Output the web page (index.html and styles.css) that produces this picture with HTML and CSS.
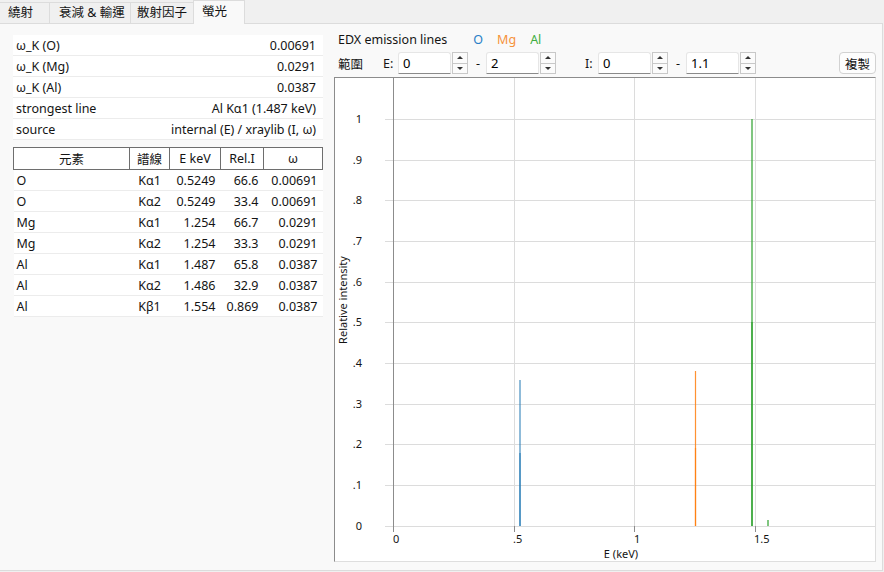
FILE: index.html
```html
<!DOCTYPE html>
<html lang="zh-Hant">
<head>
    <meta charset="UTF-8">
    <title>螢光</title>
    <link rel="stylesheet" href="styles.css">
</head>
<body>
    <div class="tabs">
        <div class="tab">繞射</div>
        <div class="tab">衰減 &amp; 輸運</div>
        <div class="tab">散射因子</div>
        <div class="tab active">螢光</div>
    </div>

    <div class="panel">
        <div class="left">
            <table class="props">
                <tr><td>ω_K (O)</td><td class="num">0.00691</td></tr>
                <tr><td>ω_K (Mg)</td><td class="num">0.0291</td></tr>
                <tr><td>ω_K (Al)</td><td class="num">0.0387</td></tr>
                <tr><td>strongest line</td><td class="num">Al Kα1 (1.487 keV)</td></tr>
                <tr><td>source</td><td class="num">internal (E) / xraylib (I, ω)</td></tr>
            </table>

            <table class="lines">
                <colgroup>
                    <col style="width: 116px">
                    <col style="width: 40px">
                    <col style="width: 51px">
                    <col style="width: 43px">
                    <col style="width: 59px">
                </colgroup>
                <thead>
                    <tr><th>元素</th><th>譜線</th><th>E keV</th><th>Rel.I</th><th>ω</th></tr>
                </thead>
                <tbody>
                    <tr><td>O</td><td class="c">Kα1</td><td class="num">0.5249</td><td class="num">66.6</td><td class="num">0.00691</td></tr>
                    <tr><td>O</td><td class="c">Kα2</td><td class="num">0.5249</td><td class="num">33.4</td><td class="num">0.00691</td></tr>
                    <tr><td>Mg</td><td class="c">Kα1</td><td class="num">1.254</td><td class="num">66.7</td><td class="num">0.0291</td></tr>
                    <tr><td>Mg</td><td class="c">Kα2</td><td class="num">1.254</td><td class="num">33.3</td><td class="num">0.0291</td></tr>
                    <tr><td>Al</td><td class="c">Kα1</td><td class="num">1.487</td><td class="num">65.8</td><td class="num">0.0387</td></tr>
                    <tr><td>Al</td><td class="c">Kα2</td><td class="num">1.486</td><td class="num">32.9</td><td class="num">0.0387</td></tr>
                    <tr><td>Al</td><td class="c">Kβ1</td><td class="num">1.554</td><td class="num">0.869</td><td class="num">0.0387</td></tr>
                </tbody>
            </table>
        </div>

        <div class="right">
            <div class="legend">
                <span class="title">EDX emission lines</span>
                <span class="el o">O</span>
                <span class="el mg">Mg</span>
                <span class="el al">Al</span>
            </div>

            <div class="range">
                <span class="lbl">範圍</span>
                <span class="axis">E:</span>
                <div class="spin"><input type="text" value="0"><div class="btns"><span class="up"></span><span class="down"></span></div></div>
                <span class="dash">-</span>
                <div class="spin"><input type="text" value="2"><div class="btns"><span class="up"></span><span class="down"></span></div></div>
                <span class="axis i">I:</span>
                <div class="spin"><input type="text" value="0"><div class="btns"><span class="up"></span><span class="down"></span></div></div>
                <span class="dash">-</span>
                <div class="spin"><input type="text" value="1.1"><div class="btns"><span class="up"></span><span class="down"></span></div></div>
                <button class="copy">複製</button>
            </div>

            <div class="plot">
                <svg width="540" height="483" viewBox="0 0 540 483">
                    <g class="grid">
                        <line x1="50" y1="448.5" x2="540" y2="448.5"/>
                        <line x1="50" y1="407.5" x2="540" y2="407.5"/>
                        <line x1="50" y1="366.5" x2="540" y2="366.5"/>
                        <line x1="50" y1="326.5" x2="540" y2="326.5"/>
                        <line x1="50" y1="285.5" x2="540" y2="285.5"/>
                        <line x1="50" y1="244.5" x2="540" y2="244.5"/>
                        <line x1="50" y1="204.5" x2="540" y2="204.5"/>
                        <line x1="50" y1="163.5" x2="540" y2="163.5"/>
                        <line x1="50" y1="122.5" x2="540" y2="122.5"/>
                        <line x1="50" y1="82.5" x2="540" y2="82.5"/>
                        <line x1="50" y1="41.5" x2="540" y2="41.5"/>
                        <line x1="179.5" y1="0" x2="179.5" y2="448"/>
                        <line x1="299.5" y1="0" x2="299.5" y2="448"/>
                        <line x1="420.5" y1="0" x2="420.5" y2="448"/>
                    </g>
                    <g class="ticks">
                        <line x1="58.5" y1="0" x2="58.5" y2="454"/>
                        <line x1="179.5" y1="448" x2="179.5" y2="454"/>
                        <line x1="299.5" y1="448" x2="299.5" y2="454"/>
                        <line x1="420.5" y1="448" x2="420.5" y2="454"/>
                    </g>

                    <!-- emission lines -->
                    <g class="em o">
                        <line x1="185" y1="448" x2="185" y2="302"/>
                        <line x1="185" y1="448" x2="185" y2="375"/>
                    </g>
                    <g class="em mg">
                        <line x1="360.5" y1="448" x2="360.5" y2="293"/>
                        <line x1="360.5" y1="448" x2="360.5" y2="370"/>
                    </g>
                    <g class="em al">
                        <line x1="417" y1="448" x2="417" y2="41"/>
                        <line x1="417" y1="448" x2="417" y2="244"/>
                        <line x1="433" y1="448" x2="433" y2="442"/>
                    </g>

                    <g class="ylab">
                        <text x="27" y="452">0</text>
                        <text x="27" y="411">.1</text>
                        <text x="27" y="370">.2</text>
                        <text x="27" y="330">.3</text>
                        <text x="27" y="289">.4</text>
                        <text x="27" y="248">.5</text>
                        <text x="27" y="208">.6</text>
                        <text x="27" y="167">.7</text>
                        <text x="27" y="126">.8</text>
                        <text x="27" y="86">.9</text>
                        <text x="27" y="45">1</text>
                    </g>
                    <g class="xlab">
                        <text x="58" y="465">0</text>
                        <text x="178" y="465">.5</text>
                        <text x="299" y="465">1</text>
                        <text x="419" y="465">1.5</text>
                    </g>
                    <text class="title" x="286" y="480">E (keV)</text>
                    <text class="title" transform="translate(12 222) rotate(-90)">Relative intensity</text>
                </svg>
            </div>
        </div>
    </div>
</body>
</html>
```

FILE: styles.css
```css
body {
    margin: 0;
    width: 884px;
    height: 572px;
    background: #f0f0f0;
    font-family: "Noto Sans", "Noto Sans CJK TC", sans-serif;
    font-size: 12.5px;
    color: #141414;
    display: flex;
    flex-direction: column;
    overflow: hidden;
}

.tabs {
    display: flex;
    height: 23px;
    align-items: flex-end;
}

.tab {
    flex-shrink: 0;
    height: 21px;
    line-height: 20px;
    padding: 0 0 0 8px;
    border: 1px solid #dcdcdc;
    border-bottom: none;
    margin-right: -1px;
    background: #f0f0f0;
    box-sizing: border-box;
    white-space: nowrap;
}

.tab:nth-child(1) { width: 50px; border-left: none; }
.tab:nth-child(2) { width: 82px; padding-left: 9px; }
.tab:nth-child(3) { width: 64px; padding-left: 6px; }

.tab.active {
    height: 24px;
    line-height: 22px;
    width: 52px;
    background: #f9f9f9;
    position: relative;
    z-index: 1;
    margin-bottom: -1px;
}

.panel {
    flex: 1;
    display: flex;
    background: #f9f9f9;
    border: 1px solid #dcdcdc;
    border-left: none;
    margin-bottom: 1px;
    margin-right: 1px;
}

.left {
    width: 310px;
    padding: 11px 0 0 13px;
    margin-right: 11px;
}

table {
    border-collapse: collapse;
    width: 310px;
    table-layout: fixed;
}

.props td {
    height: 20px;
    padding: 0 7px 0 3px;
    background: #fff;
    border-bottom: 1px solid #ececec;
    white-space: nowrap;
}

.num { text-align: right; }
.c { text-align: center; }

.lines {
    margin-top: 7px;
}

.lines th {
    height: 21px;
    font-weight: normal;
    background: #fff;
    border: 1px solid #6e6e6e;
    padding: 0;
}

.lines td {
    height: 20px;
    padding: 0 5px 0 3px;
    background: #fff;
    border-bottom: 1px solid #ececec;
    white-space: nowrap;
}

.lines td.c { padding: 0; }

.right {
    width: 542px;
    display: flex;
    flex-direction: column;
}

.legend {
    height: 26px;
    display: flex;
    align-items: center;
    padding: 2px 0 0 4px;
}

.legend .title { margin-right: 26px; }
.legend .el { margin-right: 14px; }
.el.o { color: #2a7fc7; }
.el.mg { color: #f6923a; }
.el.al { color: #3fae3f; }

.range {
    height: 22px;
    display: flex;
    align-items: center;
}

.range .lbl { margin-left: 4px; width: 45px; }
.range .axis { width: 15px; }
.range .axis.i { margin-left: 29px; width: 13px; }
.range .dash { width: 10px; margin: 0 0 0 8px; }

.spin {
    display: flex;
    height: 22px;
}

.spin input {
    width: 53px;
    height: 22px;
    box-sizing: border-box;
    border: 1px solid #e6e6e6;
    border-bottom: 1px solid #8a8a8a;
    border-radius: 3px 3px 0 0;
    padding: 0 0 0 4px;
    font: inherit;
    font-size: 13px;
    background: #fff;
    outline: none;
}

.btns {
    width: 16px;
    margin-left: 1px;
    display: flex;
    flex-direction: column;
}

.btns span {
    flex: 1;
    border: 1px solid #c8c8c8;
    background: #fbfbfb;
    display: flex;
    align-items: center;
    justify-content: center;
}

.btns span + span { border-top: none; }

.btns span::before {
    content: "";
    border-left: 3px solid transparent;
    border-right: 3px solid transparent;
}

.btns .up::before { border-bottom: 3px solid #333; }
.btns .down::before { border-top: 3px solid #333; }

.copy {
    margin-left: auto;
    width: 37px;
    height: 22px;
    padding: 0;
    font: inherit;
    background: #fdfdfd;
    border: 1px solid #d2d2d2;
    border-radius: 4px;
    color: #141414;
}

.plot {
    margin-top: 3px;
    width: 540px;
    height: 483px;
    border: 1px solid;
    border-color: #8c8c8c #dedede #dedede #8c8c8c;
    background: #fff;
}

.plot svg { display: block; }

.grid line { stroke: #dcdcdc; stroke-width: 1; }
.ticks line { stroke: #8c8c8c; stroke-width: 1; }

.em line { stroke-width: 2; }
.em.o line { stroke: #1f77b4; stroke-opacity: 0.5; }
.em.mg line { stroke: #ff7f0e; stroke-width: 1.2; stroke-opacity: 0.85; }
.em.al line { stroke: #2ca02c; stroke-opacity: 0.6; }

.plot text {
    font-family: "Noto Sans", sans-serif;
    font-size: 11px;
    fill: #141414;
}

.ylab text { text-anchor: end; }
.plot .title { text-anchor: middle; }
```
